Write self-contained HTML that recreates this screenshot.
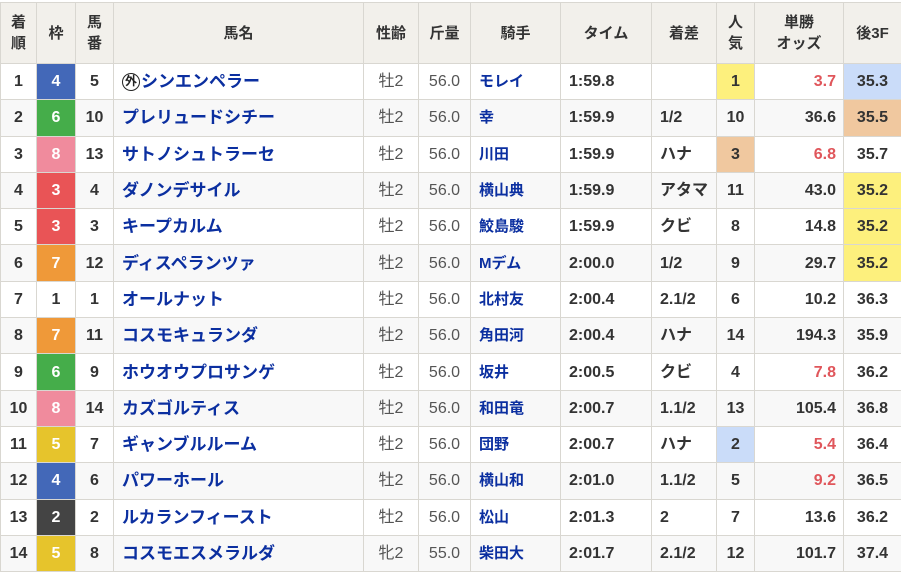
<!DOCTYPE html>
<html><head><meta charset="utf-8"><style>
body{margin:0;background:#fff;font-family:"Liberation Sans","Noto Sans CJK JP",sans-serif;}
table{position:absolute;left:0;top:2px;border-collapse:collapse;table-layout:fixed;width:901px;}
td,th{border:1px solid #d9d7d1;text-align:center;padding:0;color:#333;font-weight:bold;font-size:16px;white-space:nowrap;overflow:hidden;line-height:20px}
td *{line-height:20px}
th{background:#f2f0eb;height:60px;font-size:15px;line-height:21px;color:#333}
td{height:34.3px;padding-top:1px}
tr:nth-child(odd) td{background:#f8f8f8}
tr.h td{background:#f2f0eb}
td.n{text-align:left;padding-left:8px;color:#0b2fa0;font-size:17px}
td.j{text-align:left;padding-left:8px;color:#0b2fa0;font-size:15px}
td.s,td.w{font-weight:normal;color:#555;font-size:16px}
td.t{text-align:left;padding-left:8px}
td.d{text-align:left;padding-left:8px}
td.o{text-align:right;padding-right:7px}
td.r{color:#e0565b}
td.f{color:#fff}
tr td.f1{background:#fff;color:#333}
tr td.f2{background:#444}tr td.f3{background:#e95456}tr td.f4{background:#4368b8}
tr td.f5{background:#e6c42c}tr td.f6{background:#45ad4a}tr td.f7{background:#ef9939}tr td.f8{background:#f08b9d}
tr td.y{background:#fdf07d}tr td.b{background:#cadcf9}tr td.g{background:#f0c89f}
.ext{display:inline-block;width:18px;height:18px;border:1.5px solid #222;border-radius:50%;font-size:12px;line-height:15px!important;text-align:center;color:#222;vertical-align:top;margin-top:1px;margin-right:1px;box-sizing:border-box}
</style></head><body>
<table>
<colgroup><col style="width:36px"><col style="width:39px"><col style="width:38px"><col style="width:250px"><col style="width:55px"><col style="width:52px"><col style="width:90px"><col style="width:91px"><col style="width:65px"><col style="width:38px"><col style="width:89px"><col style="width:58px"></colgroup>
<tr class="h"><th>着<br>順</th><th>枠</th><th>馬<br>番</th><th>馬名</th><th>性齢</th><th>斤量</th><th>騎手</th><th>タイム</th><th>着差</th><th>人<br>気</th><th>単勝<br>オッズ</th><th>後3F</th></tr>
<tr><td>1</td><td class="f f4">4</td><td>5</td><td class="n"><span class="ext">外</span>シンエンペラー</td><td class="s">牡2</td><td class="w">56.0</td><td class="j">モレイ</td><td class="t">1:59.8</td><td class="d"></td><td class="y">1</td><td class="o r">3.7</td><td class="b">35.3</td></tr>
<tr><td>2</td><td class="f f6">6</td><td>10</td><td class="n">プレリュードシチー</td><td class="s">牡2</td><td class="w">56.0</td><td class="j">幸</td><td class="t">1:59.9</td><td class="d">1/2</td><td>10</td><td class="o">36.6</td><td class="g">35.5</td></tr>
<tr><td>3</td><td class="f f8">8</td><td>13</td><td class="n">サトノシュトラーセ</td><td class="s">牡2</td><td class="w">56.0</td><td class="j">川田</td><td class="t">1:59.9</td><td class="d">ハナ</td><td class="g">3</td><td class="o r">6.8</td><td>35.7</td></tr>
<tr><td>4</td><td class="f f3">3</td><td>4</td><td class="n">ダノンデサイル</td><td class="s">牡2</td><td class="w">56.0</td><td class="j">横山典</td><td class="t">1:59.9</td><td class="d">アタマ</td><td>11</td><td class="o">43.0</td><td class="y">35.2</td></tr>
<tr><td>5</td><td class="f f3">3</td><td>3</td><td class="n">キープカルム</td><td class="s">牡2</td><td class="w">56.0</td><td class="j">鮫島駿</td><td class="t">1:59.9</td><td class="d">クビ</td><td>8</td><td class="o">14.8</td><td class="y">35.2</td></tr>
<tr><td>6</td><td class="f f7">7</td><td>12</td><td class="n">ディスペランツァ</td><td class="s">牡2</td><td class="w">56.0</td><td class="j">Mデム</td><td class="t">2:00.0</td><td class="d">1/2</td><td>9</td><td class="o">29.7</td><td class="y">35.2</td></tr>
<tr><td>7</td><td class="f f1">1</td><td>1</td><td class="n">オールナット</td><td class="s">牡2</td><td class="w">56.0</td><td class="j">北村友</td><td class="t">2:00.4</td><td class="d">2.1/2</td><td>6</td><td class="o">10.2</td><td>36.3</td></tr>
<tr><td>8</td><td class="f f7">7</td><td>11</td><td class="n">コスモキュランダ</td><td class="s">牡2</td><td class="w">56.0</td><td class="j">角田河</td><td class="t">2:00.4</td><td class="d">ハナ</td><td>14</td><td class="o">194.3</td><td>35.9</td></tr>
<tr><td>9</td><td class="f f6">6</td><td>9</td><td class="n">ホウオウプロサンゲ</td><td class="s">牡2</td><td class="w">56.0</td><td class="j">坂井</td><td class="t">2:00.5</td><td class="d">クビ</td><td>4</td><td class="o r">7.8</td><td>36.2</td></tr>
<tr><td>10</td><td class="f f8">8</td><td>14</td><td class="n">カズゴルティス</td><td class="s">牡2</td><td class="w">56.0</td><td class="j">和田竜</td><td class="t">2:00.7</td><td class="d">1.1/2</td><td>13</td><td class="o">105.4</td><td>36.8</td></tr>
<tr><td>11</td><td class="f f5">5</td><td>7</td><td class="n">ギャンブルルーム</td><td class="s">牡2</td><td class="w">56.0</td><td class="j">団野</td><td class="t">2:00.7</td><td class="d">ハナ</td><td class="b">2</td><td class="o r">5.4</td><td>36.4</td></tr>
<tr><td>12</td><td class="f f4">4</td><td>6</td><td class="n">パワーホール</td><td class="s">牡2</td><td class="w">56.0</td><td class="j">横山和</td><td class="t">2:01.0</td><td class="d">1.1/2</td><td>5</td><td class="o r">9.2</td><td>36.5</td></tr>
<tr><td>13</td><td class="f f2">2</td><td>2</td><td class="n">ルカランフィースト</td><td class="s">牡2</td><td class="w">56.0</td><td class="j">松山</td><td class="t">2:01.3</td><td class="d">2</td><td>7</td><td class="o">13.6</td><td>36.2</td></tr>
<tr><td>14</td><td class="f f5">5</td><td>8</td><td class="n">コスモエスメラルダ</td><td class="s">牝2</td><td class="w">55.0</td><td class="j">柴田大</td><td class="t">2:01.7</td><td class="d">2.1/2</td><td>12</td><td class="o">101.7</td><td>37.4</td></tr>
</table>
</body></html>
